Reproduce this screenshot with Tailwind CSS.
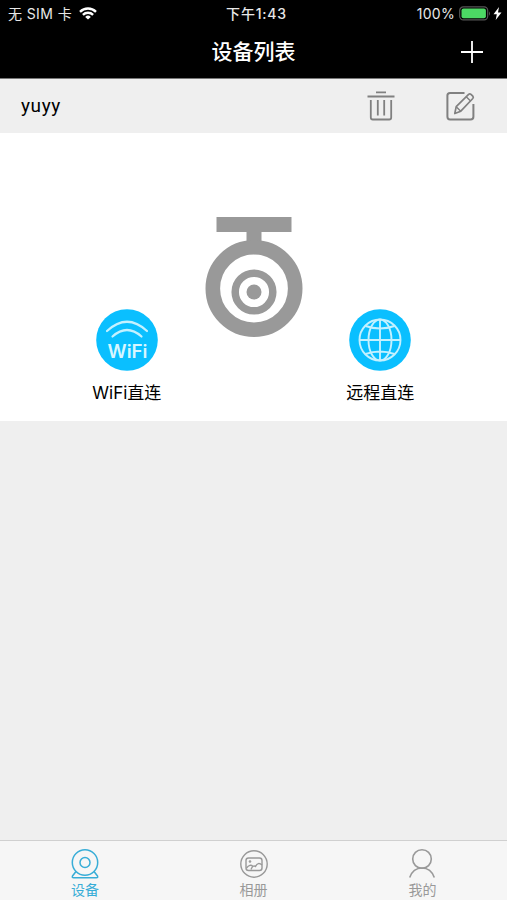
<!DOCTYPE html>
<html lang="zh-CN">
<head>
    <meta charset="UTF-8">
    <meta name="viewport" content="width=device-width, initial-scale=1.0">
    <title>设备列表</title>
    <script src="https://cdn.jsdelivr.net/npm/@tailwindcss/browser@4"></script>
</head>
<body class="flex flex-col h-screen overflow-hidden bg-[#efefef] font-['Inter','Noto_Sans_CJK_SC',sans-serif] text-black">

<header class="h-[79px] shrink-0 bg-black text-white border-b border-[#777]">
    <!-- Status bar -->
    <div class="grid grid-cols-3 items-center h-[27px] text-[14px] leading-[27px] text-[#e8e8e8]">
        <div class="flex items-center pl-2">
            <span class="whitespace-nowrap w-[71px] tracking-[0.4px]">无 SIM 卡</span>
            <svg class="w-[18px] h-[13px]" viewBox="0 0 18 13" fill="none" stroke="#fff" stroke-width="2.4">
                <path d="M1 4.8a11.5 11.5 0 0 1 16 0"/>
                <path d="M3.9 7.9a7.3 7.3 0 0 1 10.2 0"/>
                <path d="M9 12.6 6.2 9.9a4 4 0 0 1 5.6 0z" fill="#fff" stroke="none"/>
            </svg>
        </div>
        <div class="text-center font-medium pl-[6px] tracking-[0.8px]">下午1:43</div>
        <div class="flex items-center justify-end pr-[5px]">
            <span class="mr-1 tracking-[0.3px]">100%</span>
            <svg class="w-[32px] h-[15px]" viewBox="0 0 32 15">
                <rect x=".7" y=".9" width="28" height="13" rx="3.6" fill="none" stroke="#555" stroke-width="1.2"/>
                <rect x="2.5" y="2.6" width="24.4" height="9.6" rx="2" fill="#4cd964"/>
                <path d="M30 5.2q2 2.3 0 4.6z" fill="#555"/>
            </svg>
            <svg class="w-[9px] h-[13px] ml-[2px]" viewBox="0 0 9 13" fill="#fff">
                <path d="M6 0 .5 7.2h3.3L2.7 13 8.5 5.400H5z"/>
            </svg>
        </div>
    </div>
    <!-- Title bar -->
    <div class="grid grid-cols-3 items-center h-[50px]">
        <span></span>
        <h1 class="text-center text-[21px] font-medium">设备列表</h1>
        <button class="justify-self-end mr-6">
            <svg class="w-[22px] h-[22px]" viewBox="0 0 22 22" stroke="#fff" stroke-width="1.8">
                <path d="M11 0v22M0 11h22"/>
            </svg>
        </button>
    </div>
</header>

<!-- Device -->
<section class="shrink-0">
    <div class="flex items-center h-[54px] pl-[21px] pr-8">
        <span class="flex-1 text-[19px] tracking-[0.6px] font-['Roboto','Noto_Sans_CJK_SC',sans-serif]">yuyy</span>
        <svg class="w-[28px] h-[30px] mr-[51px]" viewBox="0 0 28 30" fill="none" stroke="#808080" stroke-width="1.8">
            <path d="M.5 5.500h27M9 1.400h10M3.800 9v17.500q0 2 2 2h16.400q2 0 2-2V9M10.800 9v15.500M17.200 9v15.500"/>
        </svg>
        <svg class="w-[29px] h-[30px]" viewBox="0 0 29 30" fill="none" stroke="#808080" stroke-width="2" stroke-linejoin="round">
            <path d="M18.500 2H4Q1.400 2 1.400 4.600v20.800Q1.400 28.500 4 28.500h20.600q2.800 0 2.800-2.800V13"/>
            <path d="m8.800 22.500 1.400-6.800L22.600 3.300q1.200-1 2.400 0l1.800 1.800q1 1.200 0 2.400L14.800 20.200z" stroke-width="1.7"/>
            <path d="m20.200 5.700 4.400 4.200M10.200 15.700l4.600 4.500" stroke-width="1.4"/>
        </svg>
    </div>
    <div class="grid grid-cols-3 h-[288px] px-[63.5px] bg-white text-[17px]">
        <div class="flex flex-col items-center pt-[176px]">
            <svg class="w-[62px] h-[62px]" viewBox="0 0 62 62" fill="none" stroke="#c4f1ff" stroke-width="2.2" stroke-linecap="round">
                <circle cx="31" cy="31" r="30.800" fill="#0abfff" stroke="none"/>
                <path d="M11 22q20-18.500 40 0M16.500 27.500q14.500-13 29 0"/>
                <text x="31.500" y="49.300" text-anchor="middle" textLength="40" lengthAdjust="spacingAndGlyphs" font-size="18" font-weight="600" fill="#d7f6ff" stroke="none">WiFi</text>
            </svg>
            <span class="mt-[9px] leading-[26px]">WiFi直连</span>
        </div>
        <div class="flex justify-center pt-[84px] pl-px">
            <svg class="w-[98px] h-[121px]" viewBox="0 0 98 121" fill="#999">
                <path d="M11.500 0h75v15H56.500v12h-15V15h-30z"/>
                <circle cx="49" cy="71.500" r="41.200" fill="none" stroke="#999" stroke-width="14.600"/>
                <circle cx="49" cy="75" r="18.800" fill="none" stroke="#999" stroke-width="7.500"/>
                <circle cx="49" cy="75" r="7.500"/>
            </svg>
        </div>
        <div class="flex flex-col items-center pt-[176px]">
            <svg class="w-[62px] h-[62px]" viewBox="0 0 62 62" fill="none" stroke="#c4f1ff" stroke-width="1.900">
                <circle cx="31" cy="31" r="30.800" fill="#0abfff" stroke="none"/>
                <circle cx="31" cy="31" r="20.500"/>
                <ellipse cx="31" cy="31" rx="11.500" ry="20.500"/>
                <path d="M31 10.500v41M10.500 31h41M16.500 17q14.500 5 29 0M16.500 45q14.500-5 29 0"/>
            </svg>
            <span class="mt-[9px] leading-[26px]">远程直连</span>
        </div>
    </div>
</section>

<!-- Tab bar -->
<nav class="mt-auto shrink-0 grid grid-cols-3 h-[60px] bg-[#f6f6f6] border-t border-[#d0d0d0] text-[14px] text-[#999]">
    <a href="#" class="flex flex-col items-center pt-[7px] pl-[1px] text-[#38add7]">
        <svg class="w-[30px] h-[31px]" viewBox="0 0 30 31" fill="none" stroke="currentColor" stroke-width="1.500">
            <circle cx="15" cy="14.500" r="12.700"/>
            <circle cx="15" cy="14.500" r="5"/>
            <path d="M6 23.500 2.500 28q-.8 1.800 1.200 1.800h22.600q2 0 1.200-1.800L24 23.500"/>
        </svg>
        <span class="leading-[22px]">设备</span>
    </a>
    <a href="#" class="flex flex-col items-center pt-[7px]">
        <svg class="w-[30px] h-[31px]" viewBox="0 0 30 31" fill="none" stroke="currentColor" stroke-width="1.400">
            <circle cx="15" cy="16" r="13.200"/>
            <rect x="7" y="10" width="16" height="12.500" rx="2.500"/>
            <circle cx="11" cy="13.500" r="1" fill="currentColor" stroke-width=".6"/>
            <path d="M7.500 20q3.500-4.500 6.500-1.500M12 21.500q2-5 4.500-3 2.500-5 6.500-1.500"/>
        </svg>
        <span class="leading-[22px]">相册</span>
    </a>
    <a href="#" class="flex flex-col items-center pt-[7px]">
        <svg class="w-[30px] h-[31px]" viewBox="0 0 30 31" fill="none" stroke="currentColor" stroke-width="1.600">
            <circle cx="14" cy="11" r="9.300"/>
            <path d="M1.700 29.500Q5 20 14 20t12.300 9.500"/>
        </svg>
        <span class="leading-[22px]">我的</span>
    </a>
</nav>

</body>
</html>
